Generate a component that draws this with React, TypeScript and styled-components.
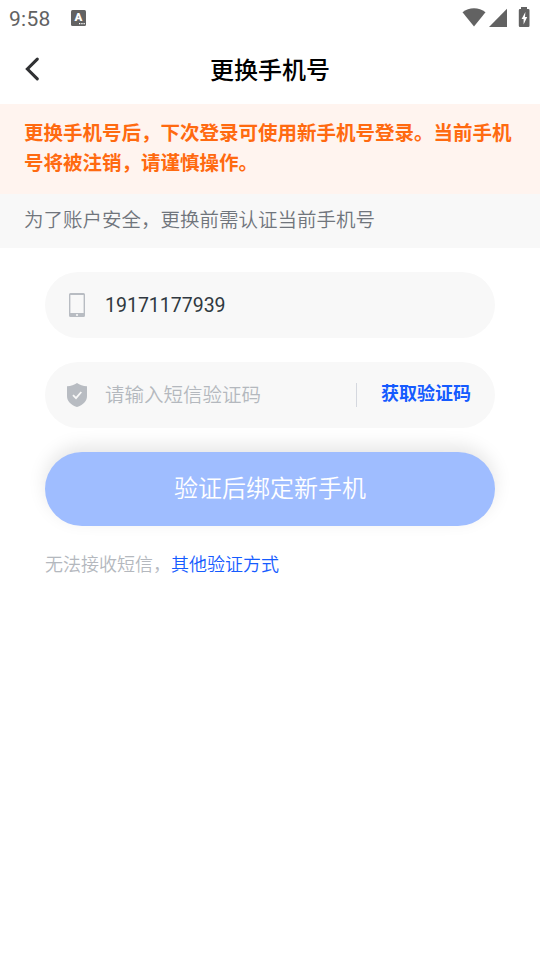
import * as React from 'react';
import styled, { createGlobalStyle } from 'styled-components';

interface FieldProps {
  icon: React.ReactNode;
  children: React.ReactNode;
}

const App = () => (
  <Screen>
    <GlobalStyle />
    <StatusBar>
      <Clock>9:58</Clock>
      <KeyboardBadge>
        A
        <BadgeDots />
      </KeyboardBadge>
      <StatusIcons />
    </StatusBar>
    <Header>
      <BackButton aria-label="返回">
        <BackIcon />
      </BackButton>
      <Title>更换手机号</Title>
    </Header>
    <Warning>
      更换手机号后，下次登录可使用新手机号登录。当前手机号将被注销，请谨慎操作。
    </Warning>
    <Hint>为了账户安全，更换前需认证当前手机号</Hint>
    <Form>
      <Field icon={<PhoneIcon />}>
        <PhoneNumber>19171177939</PhoneNumber>
      </Field>
      <Field icon={<ShieldIcon />}>
        <Placeholder>请输入短信验证码</Placeholder>
        <Divider />
        <CodeButton>获取验证码</CodeButton>
      </Field>
      <SubmitButton>验证后绑定新手机</SubmitButton>
      <Footnote>
        无法接收短信，<a>其他验证方式</a>
      </Footnote>
    </Form>
  </Screen>
);

const Field = ({ icon, children }: FieldProps) => (
  <FieldBox>
    <FieldIcon>{icon}</FieldIcon>
    {children}
  </FieldBox>
);

const BadgeDots = () => (
  <DotsSvg width="6" height="2" viewBox="0 0 6 2" fill="#fff">
    <path d="M0 0h1.3v1.3H0zM2.3 0h1.3v1.3H2.3zM4.5 0h1.3v1.3H4.5z" />
  </DotsSvg>
);

const StatusIcons = () => (
  <StatusSvg width="70" height="20" viewBox="0 0 70 20" fill="#626262">
    <path d="M0.5 4.2C7-1 17-1 23.5 4.2L12 18.5Z" />
    <path d="M27 19 45 0.8V19Z" />
    <path d="M59 -1h6v2H66.3a1.2 1.2 0 0 1 1.2 1.2V17.8A1.2 1.2 0 0 1 66.3 19H58A1.2 1.2 0 0 1 56.8 17.8V2.2A1.2 1.2 0 0 1 58 1h1z" />
    <path d="M63.4 4 59.6 11h2v5.4L65.2 9H63z" fill="#fff" />
  </StatusSvg>
);

const BackIcon = () => (
  <svg width="16" height="24" viewBox="0 0 16 24">
    <path
      d="M13.3 2.2 3.4 12 13.3 21.8"
      fill="none"
      stroke="#303133"
      strokeWidth="3.1"
      strokeLinecap="round"
      strokeLinejoin="miter"
    />
  </svg>
);

const PhoneIcon = () => (
  <svg width="16" height="24" viewBox="0 0 16 24">
    <path
      fill="#b8bcc2"
      fillRule="evenodd"
      d="M1.5 0h13A1.5 1.5 0 0 1 16 1.5v21a1.5 1.5 0 0 1-1.5 1.5h-13A1.5 1.5 0 0 1 0 22.5v-21A1.5 1.5 0 0 1 1.5 0zM1.4 2.1v18h13.2v-18z"
    />
    <circle cx="8" cy="22" r="1.1" fill="#f8f8f8" />
  </svg>
);

const ShieldIcon = () => (
  <svg width="20" height="24" viewBox="0 0 20 24">
    <path
      fill="#b8bcc2"
      d="M10 0C12.7 2 16 3 20 3.3V13C20 18.5 16 22 10 24 4 22 0 18.5 0 13V3.3C4 3 7.3 2 10 0Z"
    />
    <path d="M6 12.2 9 15.2 14.3 9" fill="none" stroke="#f8f8f8" strokeWidth="1.8" />
  </svg>
);

const GlobalStyle = createGlobalStyle`
  body {
    margin: 0;
    background: #fff;
    font-family: Roboto, 'Noto Sans CJK SC', sans-serif;
  }
`;

const Screen = styled.main`
  min-height: 960px;
`;

const StatusBar = styled.div`
  display: flex;
  height: 36px;
  padding: 0 10px 0 9px;
  align-items: center;
  box-sizing: border-box;
`;

const Clock = styled.span`
  width: 62px;
  padding-top: 2px;
  color: #626262;
  font-size: 21px;
  font-weight: 450;
  letter-spacing: 0.3px;
`;

const KeyboardBadge = styled.span`
  position: relative;
  width: 15px;
  height: 16px;
  border-radius: 1.5px;
  background: #626262;
  color: #fff;
  font-size: 11.5px;
  font-weight: 900;
  line-height: 15px;
  text-align: center;
`;

const DotsSvg = styled.svg`
  position: absolute;
  right: 1px;
  bottom: 1px;
`;

const StatusSvg = styled.svg`
  margin: 0 -2px 0 auto;
  overflow: visible;
`;

const Header = styled.header`
  display: grid;
  grid-template-columns: 60px 1fr 60px;
  height: 68px;
  align-items: center;
`;

const BackButton = styled.button`
  display: flex;
  padding: 0 0 2px 24px;
  border: 0;
  background: none;
`;

const Title = styled.h1`
  margin: 0;
  padding-top: 2px;
  font-size: 24px;
  font-weight: 500;
  line-height: 36px;
  text-align: center;
`;

const Warning = styled.p`
  height: 90px;
  margin: 0;
  padding: 15px 24px 0;
  box-sizing: border-box;
  background: #fff4ef;
  color: #ff6a10;
  font-size: 19.5px;
  font-weight: 700;
  line-height: 30px;
`;

const Hint = styled.p`
  height: 54px;
  margin: 0;
  padding: 0 24px;
  background: #f8f8f8;
  color: #70757c;
  font-size: 19.5px;
  font-weight: 350;
  line-height: 53px;
`;

const Form = styled.div`
  display: flex;
  flex-direction: column;
  gap: 24px;
  padding: 24px 45px;
`;

const FieldBox = styled.div`
  display: flex;
  height: 66px;
  padding-right: 24px;
  align-items: center;
  border-radius: 33px;
  background: #f8f8f8;
  box-sizing: border-box;
`;

const FieldIcon = styled.span`
  display: flex;
  width: 60px;
  padding-left: 4px;
  box-sizing: border-box;
  justify-content: center;
`;

const PhoneNumber = styled.span`
  color: #303840;
  font-size: 19.5px;
`;

const Placeholder = styled.span`
  flex: 1;
  padding-bottom: 3px;
  color: #b4b8be;
  font-size: 19.5px;
  font-weight: 350;
`;

const Divider = styled.i`
  width: 1px;
  height: 24px;
  margin-right: 24px;
  background: #d5d8df;
`;

const CodeButton = styled.button`
  padding: 0 0 6px;
  border: 0;
  background: none;
  color: #155bff;
  font: inherit;
  font-size: 18px;
  font-weight: 700;
`;

const SubmitButton = styled.button`
  height: 74px;
  padding: 0 0 5px;
  border: 0;
  border-radius: 37px;
  background: #9fbdff;
  box-shadow: 0 -6px 18px rgba(0, 0, 0, 0.1);
  color: #fff;
  font: inherit;
  font-size: 24px;
  font-weight: 350;
`;

const Footnote = styled.p`
  margin: 0;
  padding-top: 1px;
  color: #b4b8be;
  font-size: 18px;
  font-weight: 350;
  line-height: 28px;

  a {
    color: #155bff;
  }
`;

export default App;
